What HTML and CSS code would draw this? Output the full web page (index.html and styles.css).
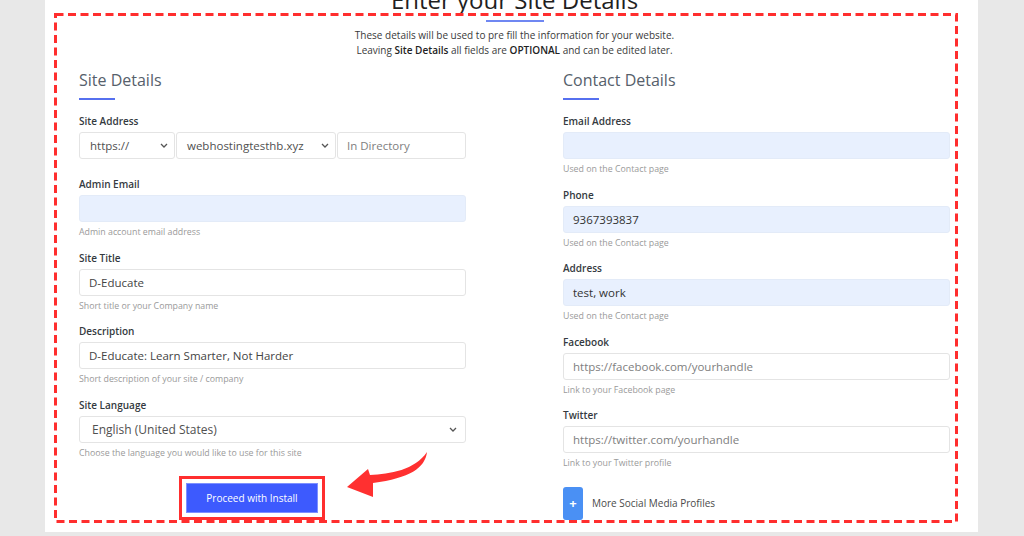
FILE: index.html
```html
<!DOCTYPE html>
<html lang="en">
<head>
<meta charset="utf-8">
<title>Enter your Site Details</title>
<link rel="stylesheet" href="styles.css">
</head>
<body>
<div class="panel">
  <div class="inner">
    <h1 class="title">Enter your Site Details</h1>
    <div class="title-bar"></div>
    <p class="intro">These details will be used to pre fill the information for your website.<br>Leaving <b>Site Details</b> all fields are <b>OPTIONAL</b> and can be edited later.</p>

    <div class="cols">
      <section class="col">
        <h2 class="heading">Site Details</h2>
        <div class="heading-bar"></div>

        <div class="group group-plain">
          <div class="label">Site Address</div>
          <div class="addr-row">
            <div class="field select"><span>https://</span><svg class="chev" viewBox="0 0 8 5" width="8" height="5"><path d="M1 1l3 3 3-3"/></svg></div>
            <div class="field select"><span>webhostingtesthb.xyz</span><svg class="chev" viewBox="0 0 8 5" width="8" height="5"><path d="M1 1l3 3 3-3"/></svg></div>
            <div class="field placeholder">In Directory</div>
          </div>
        </div>

        <div class="group">
          <div class="label">Admin Email</div>
          <div class="field filled"></div>
          <div class="help">Admin account email address</div>
        </div>

        <div class="group">
          <div class="label">Site Title</div>
          <div class="field">D-Educate</div>
          <div class="help">Short title or your Company name</div>
        </div>

        <div class="group">
          <div class="label">Description</div>
          <div class="field">D-Educate: Learn Smarter, Not Harder</div>
          <div class="help">Short description of your site / company</div>
        </div>

        <div class="group">
          <div class="label">Site Language</div>
          <div class="field select lang"><span>English (United States)</span><svg class="chev" viewBox="0 0 8 5" width="8" height="5"><path d="M1 1l3 3 3-3"/></svg></div>
          <div class="help">Choose the language you would like to use for this site</div>
        </div>

        <button class="install">Proceed with Install</button>
      </section>

      <section class="col">
        <h2 class="heading">Contact Details</h2>
        <div class="heading-bar"></div>

        <div class="group">
          <div class="label">Email Address</div>
          <div class="field filled"></div>
          <div class="help">Used on the Contact page</div>
        </div>

        <div class="group">
          <div class="label">Phone</div>
          <div class="field filled">9367393837</div>
          <div class="help">Used on the Contact page</div>
        </div>

        <div class="group">
          <div class="label">Address</div>
          <div class="field filled">test, work</div>
          <div class="help">Used on the Contact page</div>
        </div>

        <div class="group">
          <div class="label">Facebook</div>
          <div class="field placeholder">https://facebook.com/yourhandle</div>
          <div class="help">Link to your Facebook page</div>
        </div>

        <div class="group">
          <div class="label">Twitter</div>
          <div class="field placeholder">https://twitter.com/yourhandle</div>
          <div class="help">Link to your Twitter profile</div>
        </div>

        <div class="more">
          <span class="plus">+</span>
          <span class="more-text">More Social Media Profiles</span>
        </div>
      </section>
    </div>
  </div>

  <svg class="annot" width="933" height="532" viewBox="0 0 933 532">
    <rect x="10.5" y="14.5" width="901" height="507" fill="none" stroke="#ff2e2e" stroke-width="3" stroke-dasharray="8 4.5"/>
    <path d="M302,487 L323,469 L325,475 C345,474 370,470 382,452 C380,468 365,478 328,483 L328,497 Z" fill="#ff3030"/>
  </svg>
</div>
</body>
</html>
```

FILE: styles.css
```css
html, body {
  margin: 0;
  padding: 0;
}
body {
  background: #e8e8e8;
  font-family: "Open Sans", "DejaVu Sans", sans-serif;
  color: #333;
  height: 536px;
  overflow: hidden;
}
.panel {
  position: relative;
  margin-left: 45px;
  width: 933px;
  height: 532px;
  background: #fff;
  overflow: hidden;
}
.inner {
  padding: 0 28px 0 34px;
}
.title {
  margin: -15px 0 0;
  font-size: 24px;
  line-height: 30px;
  font-weight: 400;
  color: #1f1f1f;
  text-align: center;
}
.title-bar {
  width: 58px;
  height: 2px;
  margin: 5px auto 0;
  background: #6f87f2;
}
.intro {
  margin: 5.5px 0 0;
  font-size: 10px;
  line-height: 15px;
  text-align: center;
  color: #3a3a3a;
}
.intro b {
  font-weight: 600;
  color: #222;
}
.cols {
  display: grid;
  grid-template-columns: 387px 387px;
  column-gap: 97px;
  margin-top: 11.5px;
}
.heading {
  margin: 0;
  font-size: 16px;
  line-height: 22px;
  font-weight: 400;
  color: #56606b;
}
.heading-bar {
  width: 36px;
  height: 2px;
  margin-top: 7px;
  margin-bottom: 14px;
  background: #5670ef;
}
.group {
  margin-bottom: 12.5px;
}
.group-plain {
  margin-bottom: 18px;
}
.label {
  font-size: 10px;
  line-height: 14px;
  font-weight: 600;
  color: #343a40;
  margin-bottom: 4px;
}
.field {
  box-sizing: border-box;
  height: 27px;
  border: 1px solid #e4e4e4;
  border-radius: 3px;
  background: #fff;
  padding: 0 9px;
  display: flex;
  align-items: center;
  font-size: 11.5px;
  color: #444;
  white-space: nowrap;
  overflow: hidden;
}
.field.filled {
  background: #e8f0fe;
  border-color: #e3ebf8;
  color: #333;
}
.field.placeholder {
  color: #808080;
}
.field.select {
  justify-content: space-between;
  padding-left: 10px;
  padding-right: 6px;
  color: #505050;
}
.field.lang {
  padding-left: 12px;
  padding-right: 8px;
  font-size: 12px;
}
.chev {
  flex: none;
}
.chev path {
  fill: none;
  stroke: #555;
  stroke-width: 1.3;
}
.addr-row {
  display: grid;
  grid-template-columns: 96px 160px 1fr;
  column-gap: 1px;
}
.help {
  margin-top: 5px;
  font-size: 8.8px;
  line-height: 11px;
  color: #9a9a9a;
}
.install {
  display: block;
  margin: 24px 0 0 107px;
  width: 132px;
  height: 30px;
  box-sizing: border-box;
  border: 1px solid #7d90ff;
  border-radius: 0;
  background: #3d5afe;
  color: #fff;
  font-family: "Open Sans", "DejaVu Sans", sans-serif;
  font-size: 10px;
  padding: 0;
  outline: 3px solid #ff2e2e;
  outline-offset: 4px;
}
.more {
  display: flex;
  align-items: center;
  gap: 9px;
  margin-top: 17.5px;
}
.plus {
  width: 20px;
  height: 33px;
  border-radius: 3px;
  background: #4a90f4;
  color: #fff;
  font-size: 13px;
  font-weight: 700;
  display: flex;
  align-items: center;
  justify-content: center;
}
.more-text {
  font-size: 10px;
  font-weight: 500;
  color: #4a4a4a;
}
.annot {
  position: absolute;
  left: 0;
  top: 0;
  pointer-events: none;
}
```
